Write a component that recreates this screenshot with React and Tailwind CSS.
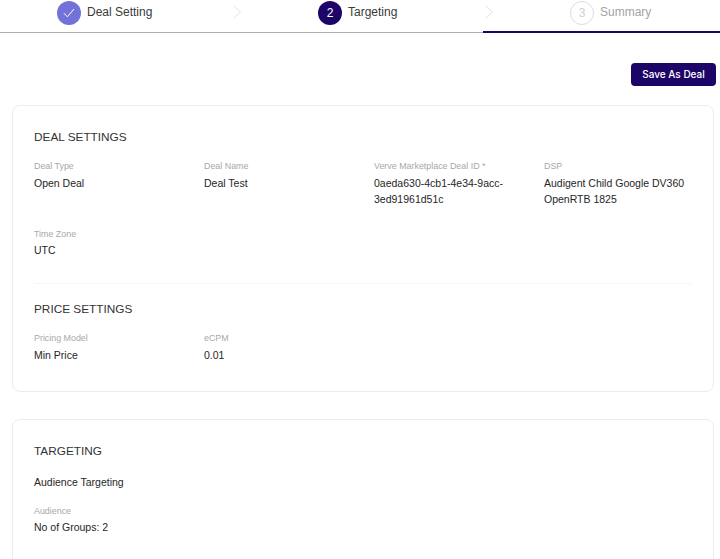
import React from "react";

const F = ({ label, children, cls = "", gap = "mt-[3px]" }) => (
  <div className={"pr-6 " + cls}>
    <div className="text-[8.9px] leading-[12px] text-[#a8a8a8]">{label}</div>
    <div className={gap + " text-[10.5px] leading-[16px] text-[#262626]"}>{children}</div>
  </div>
);

const Chevron = ({ cls = "" }) => (
  <svg width="9" height="14" viewBox="0 0 9 14" fill="none" className={"shrink-0 " + cls}>
    <path d="M1 1l6.5 6L1 13" stroke="#e3e3e3" strokeWidth="1" />
  </svg>
);

export default function App() {
  return (
    <div className="w-[720px] h-[559px] overflow-hidden bg-white font-['Liberation_Sans',Arial,sans-serif]">
      <div className="relative flex h-[33px] border-b border-[#b0b0b0]">
        <div className="flex w-[243px] shrink-0 pl-[57px] pt-px">
          <div className="flex h-6 w-6 shrink-0 items-center justify-center rounded-full bg-[#7272d8]">
            <svg width="12" height="10" viewBox="0 0 12 10" fill="none">
              <path d="M1 5.2L4.4 8.8 11 1" stroke="#fff" strokeWidth="1" />
            </svg>
          </div>
          <span className="ml-[6px] mt-[2px] whitespace-nowrap text-[12px] leading-[18px] text-[#3a3a3a]">Deal Setting</span>
          <Chevron cls="ml-[81px] mt-[4px]" />
        </div>
        <div className="flex w-[240px] shrink-0 pl-[75px] pt-px">
          <div className="flex h-6 w-6 shrink-0 items-center justify-center rounded-full bg-[#1d0568] text-[12px] text-white">2</div>
          <span className="ml-[6px] mt-[2px] whitespace-nowrap text-[12px] leading-[18px] text-[#3a3a3a]">Targeting</span>
          <Chevron cls="ml-[88px] mt-[4px]" />
        </div>
        <div className="-mb-px flex flex-1 border-b-2 border-[#1d0568] pl-[87px] pt-px">
          <div className="flex h-6 w-6 shrink-0 items-center justify-center rounded-full border border-[#dcdcdc] text-[12px] text-[#d0d0d0]">3</div>
          <span className="ml-[6px] mt-[2px] whitespace-nowrap text-[12px] leading-[18px] text-[#a3a3a3]">Summary</span>
        </div>
      </div>

      <div className="flex justify-end px-1 pt-[30px]">
        <button className="h-[23px] w-[85px] rounded-[4px] bg-[#1d0568] font-['Inter',sans-serif] text-[10px] font-medium text-white">Save As Deal</button>
      </div>

      <div className="ml-3 mr-[6px] mt-[19px] h-[287px] rounded-lg border border-[#ececec] pl-[21px] pt-[23px]">
        <h2 className="text-[11.8px] leading-[16px] text-[#333333]">DEAL SETTINGS</h2>
        <div className="mt-[15px] grid grid-cols-[repeat(4,170px)]">
          <F label="Deal Type">Open Deal</F>
          <F label="Deal Name">Deal Test</F>
          <F label="Verve Marketplace Deal ID *">0aeda630-4cb1-4e34-9acc-3ed91961d51c</F>
          <F label="DSP">Audigent Child Google DV360 OpenRTB 1825</F>
          <F label="Time Zone" cls="mt-[21px]" gap="mt-[2px]">UTC</F>
        </div>
        <div className="mr-[21px] mt-[25px] border-t border-[#f6f6f6]"></div>
        <h2 className="mt-[17px] text-[11.8px] leading-[16px] text-[#333333]">PRICE SETTINGS</h2>
        <div className="mt-[15px] grid grid-cols-[repeat(4,170px)]">
          <F label="Pricing Model">Min Price</F>
          <F label="eCPM">0.01</F>
        </div>
      </div>

      <div className="ml-3 mr-[6px] mt-[27px] h-[200px] rounded-lg border border-[#ececec] pl-[21px] pt-[23px]">
        <h2 className="text-[11.8px] leading-[16px] text-[#333333]">TARGETING</h2>
        <div className="mt-[15px] text-[10.5px] leading-[16px] text-[#262626]">Audience Targeting</div>
        <F label="Audience" cls="mt-[15px]" gap="mt-[2px]">No of Groups: 2</F>
      </div>
    </div>
  );
}
